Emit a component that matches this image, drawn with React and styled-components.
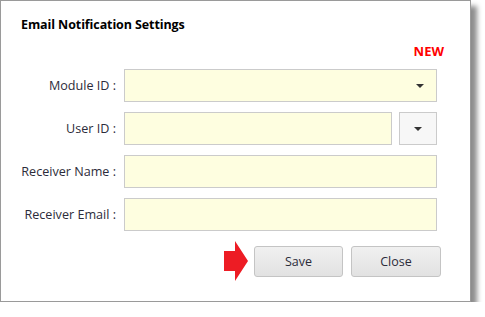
import React from 'react'
import styled, { createGlobalStyle } from 'styled-components'

const Global = createGlobalStyle`
  body {
    margin: 0;
    background: #fff;
    font-family: "Open Sans", "Noto Sans", sans-serif;
  }
`

const Panel = styled.div`
  box-sizing: border-box;
  width: 471px;
  height: 302px;
  border: 1px solid #9a9a9a;
  background: #fff;
  box-shadow: 6px 6px 5px rgba(0, 0, 0, 0.45);
  padding: 15px 32px 0 19px;
  display: flex;
  flex-direction: column;
`

const Title = styled.h1`
  margin: 0 0 0 1px;
  font-size: 12.5px;
  line-height: 18px;
  font-weight: 700;
  color: #000;
  letter-spacing: -0.1px;
`

const New = styled.div`
  align-self: flex-end;
  margin: 8px -6px 0 0;
  font-size: 13px;
  line-height: 18px;
  font-weight: 700;
  color: #ff0000;
`

const Form = styled.div`
  display: grid;
  grid-template-columns: 96px 313px;
  column-gap: 8px;
  row-gap: 10px;
  margin-top: 9px;
`

const Label = styled.label`
  display: flex;
  align-items: center;
  justify-content: flex-end;
  font-size: 12.6px;
  color: #2c2c3a;
  white-space: nowrap;
`

const Field = styled.div`
  display: flex;
  gap: 7px;
  height: 33px;
`

const Input = styled.div`
  box-sizing: border-box;
  flex: ${(p) => (p.$narrow ? '0 0 268px' : '1')};
  height: 100%;
  border: 1px solid #cbcbcb;
  background: #fefee0;
  display: flex;
  align-items: center;
  justify-content: flex-end;
  padding-right: 12px;
`

const DropButton = styled.div`
  box-sizing: border-box;
  width: 40px;
  height: 100%;
  border: 1px solid #cbcbcb;
  background: #f7f7f7;
  display: flex;
  align-items: center;
  justify-content: center;
`

const Caret = styled.span`
  width: 0;
  height: 0;
  border-left: 4px solid transparent;
  border-right: 4px solid transparent;
  border-top: 4px solid #333;
`

const Actions = styled.div`
  display: flex;
  justify-content: flex-end;
  align-items: center;
  gap: 8px;
  margin-top: 10px;
  margin-right: -3px;
`

const Arrow = styled.svg`
  margin-right: -2px;
`

const Button = styled.button`
  box-sizing: border-box;
  width: ${(p) => p.$width}px;
  height: 31px;
  border: 1px solid #c4c4c4;
  border-radius: 3px;
  background: linear-gradient(#f0f0f0, #e2e2e2);
  font-family: inherit;
  font-size: 12.5px;
  color: #2c2c3a;
  padding: 0;
`

export default function App() {
  return (
    <>
      <Global />
      <Panel>
        <Title>Email Notification Settings</Title>
        <New>NEW</New>
        <Form>
          <Label>Module ID :</Label>
          <Field>
            <Input>
              <Caret />
            </Input>
          </Field>
          <Label>User ID :</Label>
          <Field>
            <Input $narrow />
            <DropButton>
              <Caret />
            </DropButton>
          </Field>
          <Label>Receiver Name :</Label>
          <Field>
            <Input />
          </Field>
          <Label>Receiver Email :</Label>
          <Field>
            <Input />
          </Field>
        </Form>
        <Actions>
          <Arrow width="24" height="40" viewBox="0 0 24 40">
            <polygon points="0,10 11,10 11,0 24,20 11,40 11,30 0,30" fill="#ed1c24" />
          </Arrow>
          <Button $width={89}>Save</Button>
          <Button $width={90}>Close</Button>
        </Actions>
      </Panel>
    </>
  )
}
